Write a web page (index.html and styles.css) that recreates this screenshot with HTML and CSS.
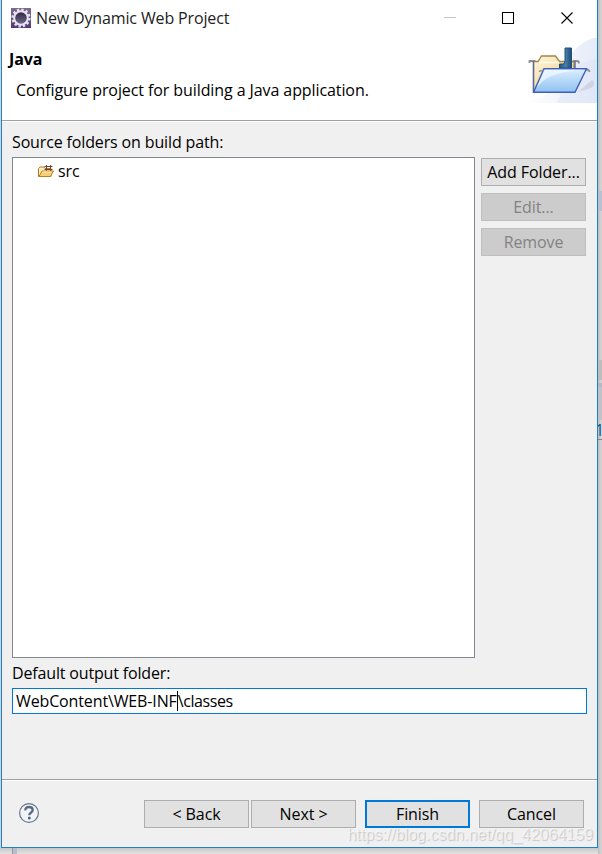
FILE: index.html
```
<!DOCTYPE html>
<html lang="en">
<head>
  <meta charset="UTF-8">
  <meta name="viewport" content="width=device-width, initial-scale=1.0">
  <title>New Dynamic Web Project</title>
  <link rel="stylesheet" href="styles.css">
</head>
<body>
  <div class="window">
    <div class="titlebar">
      <svg class="app-icon" width="20" height="20" viewBox="0 0 20 20">
        <defs>
          <linearGradient id="appBg" x1="0" y1="0" x2="0" y2="1">
            <stop offset="0" stop-color="#7d6b91"/>
            <stop offset="1" stop-color="#513879"/>
          </linearGradient>
          <linearGradient id="appHole" x1="0" y1="0" x2="0" y2="1">
            <stop offset="0" stop-color="#29243c"/>
            <stop offset="1" stop-color="#756c94"/>
          </linearGradient>
        </defs>
        <rect width="20" height="20" fill="url(#appBg)"/>
        <circle cx="10" cy="10" r="8.4" fill="none" stroke="#e6e1e9" stroke-width="2.4" stroke-dasharray="2.4 2"/>
        <circle cx="10" cy="10" r="6.8" fill="url(#appHole)" stroke="#e9e5ec" stroke-width="2"/>
      </svg>
      <span class="title">New Dynamic Web Project</span>
      <svg class="controls" width="126" height="14" viewBox="0 0 126 14" shape-rendering="crispEdges">
        <path d="M0 6.5h12" stroke="#c6c6c6"/>
        <rect x="58.5" y="1.5" width="11" height="11" fill="none" stroke="#000"/>
        <path d="M117.5 1.5l11 11M128.5 1.5l-11 11" stroke="#000" stroke-width="1.1" shape-rendering="auto"/>
      </svg>
    </div>

    <div class="header">
      <div class="header-text">
        <h1>Java</h1>
        <p>Configure project for building a Java application.</p>
      </div>
      <svg class="banner" width="75" height="66" viewBox="0 0 75 66">
        <defs>
          <linearGradient id="glow" x1="0" y1="0" x2="1" y2="0">
            <stop offset="0" stop-color="#fff"/>
            <stop offset="1" stop-color="#dce4f6"/>
          </linearGradient>
          <linearGradient id="back" x1="0" y1="0" x2="1" y2="1">
            <stop offset="0" stop-color="#fff7dd"/>
            <stop offset="1" stop-color="#e9c77b"/>
          </linearGradient>
          <linearGradient id="front" x1="0" y1="0" x2="0" y2="1">
            <stop offset="0" stop-color="#deefff"/>
            <stop offset="1" stop-color="#8fc2f3"/>
          </linearGradient>
          <linearGradient id="jay" x1="0" y1="0" x2="1" y2="0">
            <stop offset="0" stop-color="#245580"/>
            <stop offset=".5" stop-color="#4b7fa9"/>
            <stop offset="1" stop-color="#1c4b76"/>
          </linearGradient>
        </defs>
        <path d="M0 65Q38 59 44 26Q52 5 75 -1V65H0z" fill="url(#glow)" opacity=".75"/>
        <path d="M48 33Q59 23 75 21V65H35z" fill="#d6e0f5" opacity=".35"/>
        <path d="M56 54L70 42Q76 48 66 51Z" fill="#b7b5ca" opacity=".4"/>
        <path d="M7.500 25v-2h6M51 23h4q2 0 2 2.500M63 32.500q4-2 4.500 1.500" fill="none" stroke="#8e8e94" stroke-width="1.800"/>
        <path d="M11.500 53V23.500h4.500l3.500-5.500h14l4 5.500h14.500V53z" fill="url(#back)" stroke="#a28547" stroke-width="1.3"/>
        <path d="M17 24.500h20" stroke="#fffbe9" stroke-width="1.5"/>
        <path d="M11.500 23v31M53 23v9" stroke="#5966a5" stroke-width="1.4"/>
        <path d="M43 10h6.500v20H37.500v-4H41q2 0 2-3z" fill="url(#jay)" stroke="#1e507c"/>
        <path d="M11.500 54.300L22 30.700H64.500L53 54.300z" fill="url(#front)" stroke="#3f5fb8" stroke-width="1.4"/>
        <path d="M14.500 50L22.800 31.800H62Q28 34 18 46z" fill="#f1f8ff" opacity=".75"/>
        <path d="M17.500 34q0-1.500 3-1.500h1" fill="none" stroke="#8793ab" stroke-width="1.5"/>
      </svg>
    </div>

    <div class="content">
      <label class="folders-label">Source folders on build path:</label>
      <div class="folders">
        <div class="tree">
          <div class="tree-item">
            <svg width="16" height="14" viewBox="0 0 16 14">
              <path d="M.5 12.500v-8L2 3h4l1 1.500h6v8z" fill="#fff0bc" stroke="#b87427"/>
              <path d="M6.500 2.500h8M6.500 5.500h8M8.500 1v6M12.500 1v6" stroke="#70432e"/>
              <path d="M1 12.500L4 7H15.500L12.500 12.500z" fill="#f8ce72" stroke="#bd7b29"/>
              <path d="M4.500 8h9" stroke="#fff1c5"/>
            </svg>
            <span>src</span>
          </div>
        </div>
        <div class="side-buttons">
          <button type="button" class="add">Add Folder...</button>
          <button type="button" disabled>Edit...</button>
          <button type="button" disabled>Remove</button>
        </div>
      </div>
      <label class="output-label">Default output folder:</label>
      <div class="output"><span class="path-start">WebContent\WEB-INF</span><span class="caret"></span><span class="path-end">\classes</span></div>
    </div>

    <div class="footer">
      <svg class="help" width="22" height="22" viewBox="0 0 22 22">
        <circle cx="11" cy="11" r="9.400" fill="#f3f4f7" stroke="#66748f" stroke-width="1.200"/>
        <path d="M7.300 8.400Q7.200 5 11 5Q14.700 5 14.700 8Q14.700 9.500 12.800 10.700Q11.300 11.600 11.300 13.200" fill="none" stroke="#566787" stroke-width="2.300"/>
        <circle cx="11.300" cy="16" r="1.500" fill="#566787"/>
      </svg>
      <button type="button">&lt; Back</button>
      <button type="button" class="next">Next &gt;</button>
      <button type="button" class="default">Finish</button>
      <button type="button" class="cancel">Cancel</button>
    </div>
  </div>

  <div class="behind">
    <div class="band"></div>
    <div class="panel"></div>
    <div class="tab"></div>
    <span>1</span>
  </div>
  <div class="strip"></div>
  <div class="watermark">https://blog.csdn.net/qq_42064159</div>
</body>
</html>
```
FILE: styles.css
```
* { box-sizing: border-box; }
body { margin: 0; width: 602px; height: 854px; overflow: hidden; position: relative; background: linear-gradient(to bottom, #d5d5d5 848px, #c7c7c7 848px, #e2e2e2 854px); font-family: "Open Sans", "Noto Sans", sans-serif; font-size: 16px; letter-spacing: -0.09px; color: #000; }
.window { width: 597px; height: 848px; margin-left: 1px; background: #f0f0f0; border: 1px solid #1b80d2; border-top: none; display: flex; flex-direction: column; position: relative; z-index: 1; }

.titlebar { height: 38px; background: #fff; display: flex; align-items: flex-start; padding: 8px 25px 0 9px; }
.title { margin-left: 5px; line-height: 21px; color: #222; letter-spacing: -0.14px; white-space: nowrap; }
.controls { margin-left: auto; margin-top: 3px; margin-right: 2px; overflow: visible; }

.header { height: 83px; background: #fff; border-bottom: 1px solid #a0a0a0; display: flex; justify-content: space-between; }
.header-text { padding: 10px 0 0 7px; }
h1 { font-size: 16px; line-height: 22px; margin: 0; }
.header p { margin: 9px 0 0 7px; line-height: 22px; white-space: nowrap; }
.banner { flex: none; }

.content { height: 659px; border-top: 1px solid #fff; border-bottom: 1px solid #a0a0a0; padding: 10px 10px 0; display: flex; flex-direction: column; flex: none; }
.folders-label { height: 25px; line-height: 20px; letter-spacing: -0.14px; }
.folders { display: flex; gap: 6px; }
.tree { width: 463px; height: 501px; border: 1px solid #828790; background: #fff; }
.tree-item { display: flex; align-items: center; gap: 4px; padding-left: 25px; height: 25px; }
.side-buttons { display: flex; flex-direction: column; gap: 7px; padding-top: 1px; }
button { width: 105px; height: 28px; padding: 0; border: 1px solid #adadad; background: #e1e1e1; font: inherit; letter-spacing: inherit; color: #000; white-space: nowrap; }
button:disabled { background: #ccc; border-color: #bfbfbf; color: #838383; }
.output-label { height: 30px; line-height: 30px; letter-spacing: -0.16px; }
.output { width: 575px; height: 26px; border: 1px solid #0078d7; background: #fff; padding-left: 3px; display: flex; align-items: center; }
.path-start { letter-spacing: -0.13px; }
.path-end { letter-spacing: -0.4px; }
.caret { width: 1px; height: 20px; background: #000; }

.footer { flex: 1; border-top: 1px solid #fff; display: flex; align-items: flex-start; padding: 19px 13px 0 16px; }
.help { margin: 2px auto 0 0; }
.next { margin-left: 2px; }
.default { margin-left: 9px; border: 2px solid #0078d7; }
.cancel { margin-left: 9px; }

/* what shows past the right and bottom edges of the dialog */
.behind { position: absolute; left: 598px; top: 0; width: 4px; height: 854px; background: linear-gradient(to right, #bfbfbf, #d7d7d7); display: flex; flex-direction: column; }
.band { flex: none; height: 20px; margin-top: 191px; background: #b8c1d2; }
.panel { flex: none; height: 20px; margin-top: 149px; background: #bdbdbd; }
.tab { flex: none; height: 37px; margin-top: 3px; border-top: 4px solid #b5b9cb; background: #c1c1c8; }
.behind span { flex: none; height: 20px; line-height: 20px; border-bottom: 1px solid #888; color: #075b9c; text-indent: -3px; }
.strip { position: absolute; left: 12px; top: 848px; width: 5px; height: 6px; background: #b9bccc; border-left: 1px solid #999; }
.watermark { position: absolute; z-index: 2; right: 9px; top: 825px; font: 16px/20px "Liberation Sans", sans-serif; letter-spacing: 0; color: rgba(255, 255, 255, .5); text-shadow: 1px 1px 1px rgba(0, 0, 0, .18); white-space: nowrap; }
```
